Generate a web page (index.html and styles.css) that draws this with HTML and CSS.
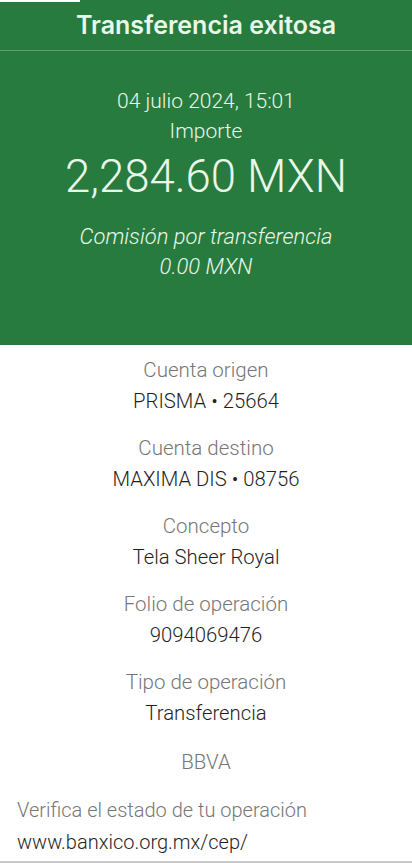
FILE: index.html
```html
<!DOCTYPE html>
<html>
<head>
	<meta name="viewport" content="width=device-width, initial-scale=1.0, maximum-scale=1">
	<link rel="stylesheet" href="styles.css">
	<title>Transferencia exitosa</title>
</head>
<body>
	<div class="strip"></div>
	<div class="hero">
		<div class="title">Transferencia exitosa</div>
		<div class="summary">
			<div class="date">04 julio 2024, 15:01</div>
			<div class="label-light">Importe</div>
			<div class="amount">2,284.60 MXN</div>
			<div class="fee">Comisión por transferencia</div>
			<div class="fee">0.00 MXN</div>
		</div>
	</div>

	<div class="details">
		<div class="item">
			<div class="key">Cuenta origen</div>
			<div class="value">PRISMA • 25664</div>
		</div>
		<div class="item">
			<div class="key">Cuenta destino</div>
			<div class="value">MAXIMA DIS • 08756</div>
		</div>
		<div class="item">
			<div class="key">Concepto</div>
			<div class="value">Tela Sheer Royal</div>
		</div>
		<div class="item">
			<div class="key">Folio de operación</div>
			<div class="value">9094069476</div>
		</div>
		<div class="item">
			<div class="key">Tipo de operación</div>
			<div class="value">Transferencia</div>
		</div>
		<div class="item bank">
			<div class="key">BBVA</div>
		</div>
	</div>

	<div class="verify">
		<div class="key">Verifica el estado de tu operación</div>
		<div class="value">www.banxico.org.mx/cep/</div>
	</div>
	<div class="bottom-line"></div>
</body>
</html>
```

FILE: styles.css
```css
	body {
		margin: 0;
		background-color: white;
		font-family: Roboto, "Liberation Sans", sans-serif;
		font-weight: 300;
		height: 863px;
		overflow: hidden;
		position: relative;
	}

	.strip {
		position: absolute;
		top: 0;
		left: 0;
		width: 80px;
		height: 2px;
		background-color: white;
	}

	.hero {
		background-color: #287b3e;
		color: #e9f7ea;
		height: 345px;
	}

	.title {
		height: 51px;
		line-height: 51px;
		text-align: center;
		font-family: Inter, Roboto, sans-serif;
		font-weight: 600;
		font-size: 25px;
		border-bottom: 1px solid #5f9f70;
		box-sizing: border-box;
	}

	.summary {
		text-align: center;
		padding-top: 35px;
	}

	.date, .label-light {
		font-size: 21px;
		line-height: 30px;
	}

	.amount {
		font-size: 45.5px;
		line-height: 62px;
		margin-bottom: 14px;
	}

	.fee {
		font-size: 22px;
		font-style: italic;
		line-height: 30px;
	}

	.details {
		padding-top: 10px;
		text-align: center;
	}

	.item {
		margin-bottom: 16px;
	}

	.bank {
		padding-top: 2px;
	}

	.key {
		color: #767676;
		font-size: 20.5px;
		line-height: 31px;
	}

	.value {
		color: #1f1f1f;
		font-size: 20.3px;
		line-height: 31px;
	}

	.verify {
		padding: 0 17px;
		margin-top: 0;
	}

	.verify .key, .verify .value {
		font-size: 20px;
		line-height: 32px;
	}

	.bottom-line {
		position: absolute;
		left: 0;
		right: 0;
		bottom: 0;
		height: 2px;
		background-color: #c8c8c8;
	}
```
